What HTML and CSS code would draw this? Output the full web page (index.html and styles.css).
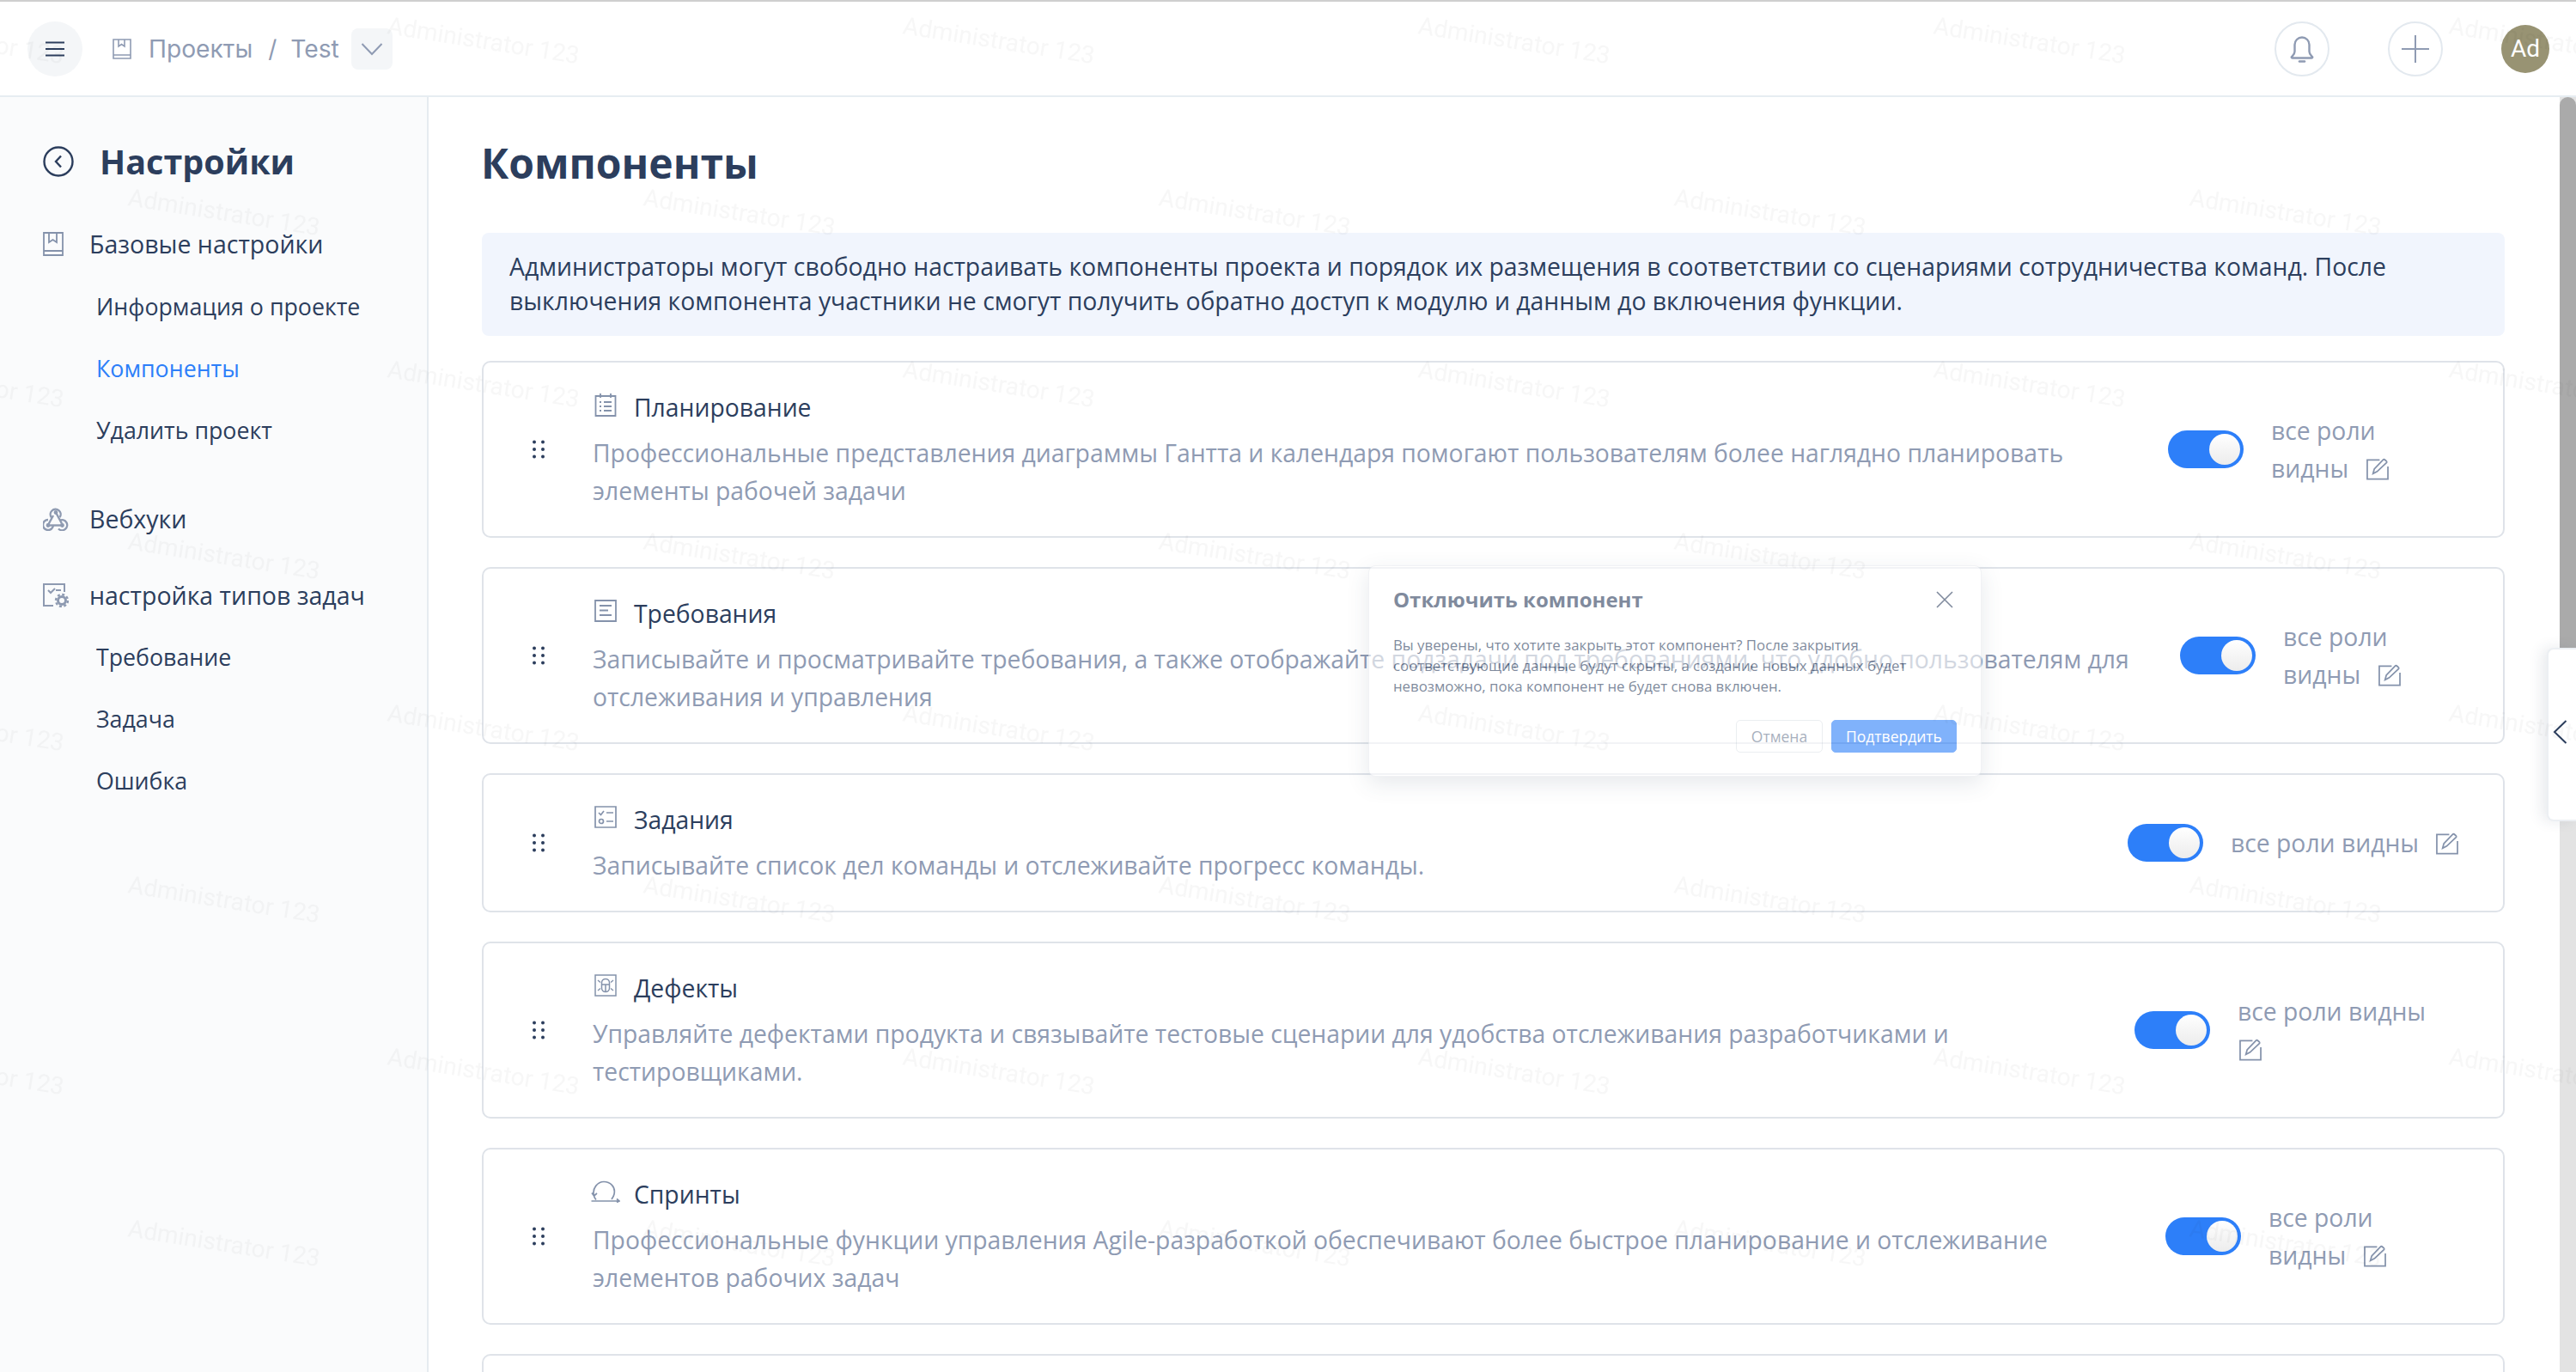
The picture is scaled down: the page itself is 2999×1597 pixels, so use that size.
FILE: index.html
```html
<!DOCTYPE html>
<html lang="ru">
<head>
<meta charset="utf-8">
<title>Компоненты</title>
<link rel="stylesheet" href="styles.css">
</head>
<body>
<div class="app">
  <header class="topbar">
    <button class="menu-btn" type="button">
      <svg width="24" height="20" viewBox="0 0 24 20"><path d="M1 2.500h22M1 10h22M1 17.500h22" stroke="#2c3e5d" stroke-width="2" fill="none"/></svg>
    </button>
    <svg class="crumb-icon" width="22" height="24" viewBox="0 0 22 24" fill="none" stroke="#8f9bb3" stroke-width="1.600"><path d="M1 1h20v22H1zM1 19h20M7 1v8l3.500-2.500L14 9V1"/></svg>
    <span class="crumb">Проекты</span>
    <span class="crumb-sep">/</span>
    <span class="crumb">Test</span>
    <span class="crumb-drop">
      <svg width="26" height="16" viewBox="0 0 26 16" fill="none" stroke="#8f9bb3" stroke-width="2"><path d="M1.500 2 13 14 24.500 2"/></svg>
    </span>
    <div class="top-actions">
      <button class="round-btn" type="button">
        <svg width="30" height="34" viewBox="0 0 30 34" fill="none" stroke="#8f9bb3" stroke-width="2.400"><path d="M3 26c2-2 3.500-3 3.500-6v-8a8.500 8.500 0 0 1 17 0v8c0 3 1.500 4 3.500 6 .7.900 0 1.500-1 1.500H4c-1 0-1.700-.6-1-1.500z"/><path d="M12 31.500h6" stroke-width="2.600" stroke-linecap="round"/></svg>
      </button>
      <button class="round-btn" type="button">
        <svg width="32" height="32" viewBox="0 0 32 32" fill="none" stroke="#8f9bb3" stroke-width="2"><path d="M16 0v32M0 16h32"/></svg>
      </button>
      <span class="avatar">Ad</span>
    </div>
  </header>

  <div class="layout">
    <aside class="sidebar">
      <div class="side-head">
        <svg width="36" height="36" viewBox="0 0 36 36" fill="none" stroke="#2c3e5d" stroke-width="2.400"><circle cx="18" cy="18" r="16.500"/><path d="M21 11.500 15 18l6 6.500"/></svg>
        <h2 class="side-title">Настройки</h2>
      </div>
      <nav class="side-nav">
        <a class="nav-group">
          <svg width="24" height="28" viewBox="0 0 24 28" fill="none" stroke="#8492ab" stroke-width="1.800"><path d="M1 1h22v26H1zM1 22h22M7 1v11l4.500-3 4.500 3V1"/></svg>
          Базовые настройки
        </a>
        <a class="nav-sub">Информация о проекте</a>
        <a class="nav-sub nav-active">Компоненты</a>
        <a class="nav-sub">Удалить проект</a>
        <a class="nav-group nav-gap">
          <svg width="30" height="28" viewBox="0 0 30 28" fill="none" stroke="#8e9ab1" stroke-width="2.400"><path d="M10 12.500a6 6 0 1 1 9.700-.5"/><path d="M15 6.500 22 19.500"/><path d="M12 21.500a6 6 0 1 1-6-6.500"/><path d="M6 21.500h16"/><path d="M19.500 15.800a6 6 0 1 1-1.500 9.700"/><path d="M6 21 12 10"/><circle cx="15" cy="6.500" r="1.200" fill="#8e9ab1"/><circle cx="6" cy="21.500" r="1.200" fill="#8e9ab1"/><circle cx="22.500" cy="21.500" r="1.200" fill="#8e9ab1"/></svg>
          Вебхуки
        </a>
        <a class="nav-group nav-types">
          <svg width="30" height="28" viewBox="0 0 30 28" fill="none" stroke="#8e9ab1" stroke-width="2"><path d="M12 26H1V1h24v9"/><path d="M6 8l3 3 5-5M15 8h6"/><circle cx="22" cy="20" r="4.500" stroke-width="3"/><circle cx="22" cy="20" r="7" stroke-width="2.400" stroke-dasharray="3 2.500"/></svg>
          настройка типов задач
        </a>
        <a class="nav-sub">Требование</a>
        <a class="nav-sub">Задача</a>
        <a class="nav-sub">Ошибка</a>
      </nav>
    </aside>

    <main class="main">
      <div class="content">
        <h1 class="page-title">Компоненты</h1>
        <p class="notice">Администраторы могут свободно настраивать компоненты проекта и порядок их размещения в соответствии со сценариями сотрудничества команд. После выключения компонента участники не смогут получить обратно доступ к модулю и данным до включения функции.</p>

        <section class="card">
          <span class="drag"><svg width="14" height="22" viewBox="0 0 14 22" fill="#2c3e5d"><circle cx="2" cy="2.500" r="2"/><circle cx="12" cy="2.500" r="2"/><circle cx="2" cy="11" r="2"/><circle cx="12" cy="11" r="2"/><circle cx="2" cy="19.500" r="2"/><circle cx="12" cy="19.500" r="2"/></svg></span>
          <div class="card-body">
            <div class="card-title">
              <svg class="card-icon" width="26" height="28" viewBox="0 0 26 28" fill="none" stroke="#8492ab" stroke-width="1.800"><path d="M1.500 4h23v23h-23zM7 1v5M19 1v5M6 11h2M11 11h9M6 16h2M11 16h9M6 21h2M11 21h9"/></svg>
              Планирование
            </div>
            <p class="card-desc">Профессиональные представления диаграммы Гантта и календаря помогают пользователям более наглядно планировать элементы рабочей задачи</p>
          </div>
          <div class="actions actions-a">
            <span class="toggle"><span class="knob"></span></span>
            <span class="roles roles-narrow"><span class="roles-text">все роли видны</span> <svg class="edit" width="26" height="27" viewBox="0 0 27 27" fill="none" stroke="#8492ab" stroke-width="1.800"><path d="M16 3H1v23h25V11"/><path d="M8 19.500 9.500 14 20.500 2.500c1-1 5 2.500 4 3.500L13 17z"/></svg></span>
          </div>
        </section>

        <section class="card">
          <span class="drag"><svg width="14" height="22" viewBox="0 0 14 22" fill="#2c3e5d"><circle cx="2" cy="2.500" r="2"/><circle cx="12" cy="2.500" r="2"/><circle cx="2" cy="11" r="2"/><circle cx="12" cy="11" r="2"/><circle cx="2" cy="19.500" r="2"/><circle cx="12" cy="19.500" r="2"/></svg></span>
          <div class="card-body">
            <div class="card-title">
              <svg class="card-icon" width="26" height="26" viewBox="0 0 26 26" fill="none" stroke="#8492ab" stroke-width="1.800"><path d="M1 1h24v24H1zM6 7h14M6 12.500h10M6 18h14"/></svg>
              Требования
            </div>
            <p class="card-desc">Записывайте и просматривайте требования, а также отображайте подзадачи под требованиями, что удобно пользователям для отслеживания и управления</p>
          </div>
          <div class="actions actions-b">
            <span class="toggle"><span class="knob"></span></span>
            <span class="roles roles-narrow"><span class="roles-text">все роли видны</span> <svg class="edit" width="26" height="27" viewBox="0 0 27 27" fill="none" stroke="#8492ab" stroke-width="1.800"><path d="M16 3H1v23h25V11"/><path d="M8 19.500 9.500 14 20.500 2.500c1-1 5 2.500 4 3.500L13 17z"/></svg></span>
          </div>
        </section>

        <section class="card">
          <span class="drag"><svg width="14" height="22" viewBox="0 0 14 22" fill="#2c3e5d"><circle cx="2" cy="2.500" r="2"/><circle cx="12" cy="2.500" r="2"/><circle cx="2" cy="11" r="2"/><circle cx="12" cy="11" r="2"/><circle cx="2" cy="19.500" r="2"/><circle cx="12" cy="19.500" r="2"/></svg></span>
          <div class="card-body">
            <div class="card-title">
              <svg class="card-icon" width="26" height="26" viewBox="0 0 26 26" fill="none" stroke="#8492ab" stroke-width="1.700"><path d="M1 1h24v24H1zM5 8l2.500 2.500L11 6M14 8h8M14 18h8"/><circle cx="8" cy="18" r="2.500"/></svg>
              Задания
            </div>
            <p class="card-desc">Записывайте список дел команды и отслеживайте прогресс команды.</p>
          </div>
          <div class="actions actions-c">
            <span class="toggle"><span class="knob"></span></span>
            <span class="roles roles-wide"><span class="roles-text">все роли видны</span> <svg class="edit" width="26" height="27" viewBox="0 0 27 27" fill="none" stroke="#8492ab" stroke-width="1.800"><path d="M16 3H1v23h25V11"/><path d="M8 19.500 9.500 14 20.500 2.500c1-1 5 2.500 4 3.500L13 17z"/></svg></span>
          </div>
        </section>

        <section class="card">
          <span class="drag"><svg width="14" height="22" viewBox="0 0 14 22" fill="#2c3e5d"><circle cx="2" cy="2.500" r="2"/><circle cx="12" cy="2.500" r="2"/><circle cx="2" cy="11" r="2"/><circle cx="12" cy="11" r="2"/><circle cx="2" cy="19.500" r="2"/><circle cx="12" cy="19.500" r="2"/></svg></span>
          <div class="card-body">
            <div class="card-title">
              <svg class="card-icon" width="26" height="26" viewBox="0 0 26 26" fill="none" stroke="#8492ab" stroke-width="1.500"><path d="M1 1h24v24H1z"/><path d="M8.500 10c0-6 9-6 9 0v6c0 6-9 6-9 0zM8.500 12h9M13 12v8M4 7l3 2.500M22 7l-3 2.500M4 19l3-2.500M22 19l-3-2.500"/></svg>
              Дефекты
            </div>
            <p class="card-desc">Управляйте дефектами продукта и связывайте тестовые сценарии для удобства отслеживания разработчиками и тестировщиками.</p>
          </div>
          <div class="actions actions-d">
            <span class="toggle"><span class="knob"></span></span>
            <span class="roles roles-mid"><span class="roles-text">все роли видны</span> <svg class="edit" width="26" height="27" viewBox="0 0 27 27" fill="none" stroke="#8492ab" stroke-width="1.800"><path d="M16 3H1v23h25V11"/><path d="M8 19.500 9.500 14 20.500 2.500c1-1 5 2.500 4 3.500L13 17z"/></svg></span>
          </div>
        </section>

        <section class="card">
          <span class="drag"><svg width="14" height="22" viewBox="0 0 14 22" fill="#2c3e5d"><circle cx="2" cy="2.500" r="2"/><circle cx="12" cy="2.500" r="2"/><circle cx="2" cy="11" r="2"/><circle cx="12" cy="11" r="2"/><circle cx="2" cy="19.500" r="2"/><circle cx="12" cy="19.500" r="2"/></svg></span>
          <div class="card-body">
            <div class="card-title">
              <svg class="card-icon card-icon-wide" width="34" height="26" viewBox="0 0 34 26" fill="none" stroke="#8492ab" stroke-width="1.700"><path d="M3.500 18C1 9 8 1.500 15 1.500S29 7 27 16c-.4 2-1.500 4-3 6M3.500 18 1 14.500M3.500 18 7 15M6 22.500c-1-1-2-2.800-2.500-4.500M.5 24H33M30 21.500l3 2.500-3 1.500"/></svg>
              Спринты
            </div>
            <p class="card-desc">Профессиональные функции управления Agile-разработкой обеспечивают более быстрое планирование и отслеживание элементов рабочих задач</p>
          </div>
          <div class="actions actions-e">
            <span class="toggle"><span class="knob"></span></span>
            <span class="roles roles-narrow"><span class="roles-text">все роли видны</span> <svg class="edit" width="26" height="27" viewBox="0 0 27 27" fill="none" stroke="#8492ab" stroke-width="1.800"><path d="M16 3H1v23h25V11"/><path d="M8 19.500 9.500 14 20.500 2.500c1-1 5 2.500 4 3.500L13 17z"/></svg></span>
          </div>
        </section>

        <section class="card card-last"></section>
      </div>
      <div class="scrollbar"><div class="scroll-thumb"></div></div>
    </main>
  </div>

  <div class="dialog">
    <div class="dialog-head">
      <h3 class="dialog-title">Отключить компонент</h3>
      <svg width="20" height="20" viewBox="0 0 20 20" fill="none" stroke="#2c3e5d" stroke-width="1.600"><path d="M1 1l18 18M19 1 1 19"/></svg>
    </div>
    <p class="dialog-text">Вы уверены, что хотите закрыть этот компонент? После закрытия соответствующие данные будут скрыты, а создание новых данных будет невозможно, пока компонент не будет снова включен.</p>
    <div class="dialog-foot">
      <button class="btn" type="button">Отмена</button>
      <button class="btn btn-primary" type="button">Подтвердить</button>
    </div>
  </div>

  <div class="side-tab">
    <svg width="17" height="28" viewBox="0 0 17 28" fill="none" stroke="#2c3e5d" stroke-width="2"><path d="M15.500 1 2 14l13.500 13"/></svg>
  </div>

  <svg class="watermark" width="100%" height="100%" aria-hidden="true">
    <defs>
      <pattern id="wm" x="98" y="-1" width="600" height="400" patternUnits="userSpaceOnUse">
        <text class="wm-text" x="50" y="240" transform="rotate(9 50 240)">Administrator 123</text>
        <text class="wm-text" x="352" y="40" transform="rotate(9 352 40)">Administrator 123</text>
      </pattern>
    </defs>
    <rect width="100%" height="100%" fill="url(#wm)"/>
  </svg>
</div>
</body>
</html>
```
FILE: styles.css
```css
* { box-sizing: border-box; }
html, body { margin: 0; height: 100%; overflow: hidden; background: #fff; }
body { font-family: "Open Sans", "Noto Sans", sans-serif; color: #2c3e5d; }
button { font: inherit; padding: 0; cursor: pointer; }
h1, h2, h3, p { margin: 0; }

.app { position: relative; display: flex; flex-direction: column; height: 100vh; overflow: hidden; }

/* top bar */
.topbar { flex: none; height: 113px; display: flex; align-items: center; padding: 0 31px 0 32px; border-top: 2px solid #cfcfcf; border-bottom: 2px solid #e6edf2; background: #fff; font-family: Inter, sans-serif; }
.menu-btn { width: 64px; height: 64px; border: 0; border-radius: 50%; background: #f4f6f8; display: flex; align-items: center; justify-content: center; }
.crumb-icon { margin-left: 35px; margin-right: 20px; }
.crumb { font-size: 28.200px; color: #8f9bb3; line-height: 40px; }
.crumb-sep { font-size: 28px; color: #8f9bb3; margin: 0 16px 0 18px; }
.crumb-drop { width: 48px; height: 48px; margin-left: 14px; border-radius: 8px; background: #f4f6f8; display: flex; align-items: center; justify-content: center; }
.top-actions { margin-left: auto; display: flex; align-items: center; }
.round-btn { width: 64px; height: 64px; margin-right: 68px; border: 2px solid #e3e9ef; border-radius: 50%; background: #fff; display: flex; align-items: center; justify-content: center; }
.round-btn + .round-btn { margin-right: 0; }
.avatar { width: 56px; height: 56px; margin-left: 68px; border-radius: 50%; background: #989373; color: #fff; font: 28px/56px Roboto, sans-serif; text-align: center; }

.layout { flex: 1; display: flex; min-height: 0; }

/* sidebar */
.sidebar { flex: none; width: 499px; background: #fafbfc; border-right: 2px solid #e6ebf0; padding: 53px 0 0 50px; }
.side-head { display: flex; align-items: center; height: 44px; }
.side-title { margin-left: 30px; font-size: 39.500px; font-weight: 700; line-height: 44px; color: #2c3e5d; }
.side-nav { display: flex; flex-direction: column; margin-top: 38px; }
.nav-group { position: relative; display: flex; align-items: center; height: 72px; padding-left: 54px; font-size: 28.500px; color: #2c3e5d; }
.nav-group svg { position: absolute; left: 0; top: 22px; }
.nav-sub { display: flex; align-items: center; height: 72px; padding-left: 62px; font-size: 26.750px; color: #2c3e5d; }
.nav-active { color: #2d7ff9; }
.nav-gap { margin-top: 32px; }
.nav-types { margin-top: 17px; height: 71px; }

/* main */
.main { flex: 1; min-width: 0; display: flex; }
.content { flex: 1; min-width: 0; padding: 46px 64px 0 62px; overflow: hidden; }
.page-title { margin-left: -1px; font-size: 48px; font-weight: 700; line-height: 62px; color: #2c3e5d; }
.notice { margin-top: 50px; padding: 19px 32px; height: 120px; border-radius: 8px; background: #f1f5fd; font-size: 28.350px; line-height: 40px; color: #2c3e5d; }

.card { display: flex; align-items: center; margin-top: 29px; padding: 30px 0 31px; border: 2px solid #dfe3e9; border-radius: 10px; background: #fff; }
.card + .card { margin-top: 34px; }
.card-last { height: 120px; flex: none; }
.drag { flex: none; width: 127px; padding-left: 57px; display: flex; }
.card-body { flex: 1; min-width: 0; padding-right: 32px; }
.card-title { display: flex; align-items: center; height: 44px; font-size: 28.300px; color: #2c3e5d; }
.card-icon { flex: none; margin: 0 20px 6px 2px; }
.card-icon-wide { margin: 0 16px 6px -2px; }
.card-desc { margin-top: 9px; font-size: 28.300px; line-height: 44px; color: #8f9bb3; }

.actions { flex: none; display: flex; align-items: center; gap: 32px; }
.actions-a { width: 390px; }
.actions-b { width: 376px; }
.actions-c { width: 437px; }
.actions-d { width: 429px; }
.actions-e { width: 393px; }
.toggle { flex: none; display: flex; justify-content: flex-end; align-items: center; width: 88px; height: 44px; padding-right: 4px; border-radius: 22px; background: #2d7ff9; }
.knob { width: 36px; height: 36px; border-radius: 50%; background: linear-gradient(#fff, #ececec); }
.roles { font-size: 28.300px; line-height: 44px; color: #8f9bb3; }
.roles-text { margin-right: 11px; }
.roles-narrow { width: 200px; }
.roles-wide { width: 290px; }
.roles-mid { width: 240px; }
.edit { margin-left: 2px; vertical-align: -3px; }

/* custom scrollbar */
.scrollbar { flex: none; width: 19px; background: #e3e3e3; }
.scroll-thumb { height: 800px; border-radius: 10px 10px 0 0; background: #aaa; }

/* dialog caught in its opening animation */
.dialog { position: absolute; left: 1593px; top: 658px; width: 714px; height: 246px; padding: 26px 28px; opacity: .6; background: #fff; border: 1px solid #e8ebef; border-radius: 8px; box-shadow: 0 8px 24px rgba(40, 60, 90, .18); }
.dialog-head { display: flex; align-items: center; justify-content: space-between; height: 26px; padding-right: 4px; }
.dialog-title { font-size: 24px; font-weight: 700; line-height: 26px; color: #2c3e5d; }
.dialog-text { margin-top: 28px; font-size: 16.800px; line-height: 24px; color: #2c3e5d; }
.dialog-foot { display: flex; justify-content: flex-end; gap: 10px; margin-top: 27px; }
.btn { height: 38px; width: 101px; border: 1px solid #dfe3e9; border-radius: 5px; background: #fff; font-size: 17.500px; color: #6f7c93; }
.btn-primary { width: 146px; border-color: #2d7ff9; background: #2d7ff9; color: #fff; }

.side-tab { position: absolute; right: 0; top: 754px; width: 34px; height: 202px; display: flex; align-items: center; padding: 0 0 6px 5px; background: #fff; border: 2px solid #eceff3; border-right: 0; border-radius: 8px 0 0 8px; box-shadow: -6px 0 16px rgba(40, 60, 90, .1); }

.watermark { position: absolute; left: 0; top: 0; pointer-events: none; }
.wm-text { font-family: Roboto, sans-serif; font-size: 28.200px; fill: rgba(0, 0, 0, .032); }
```
